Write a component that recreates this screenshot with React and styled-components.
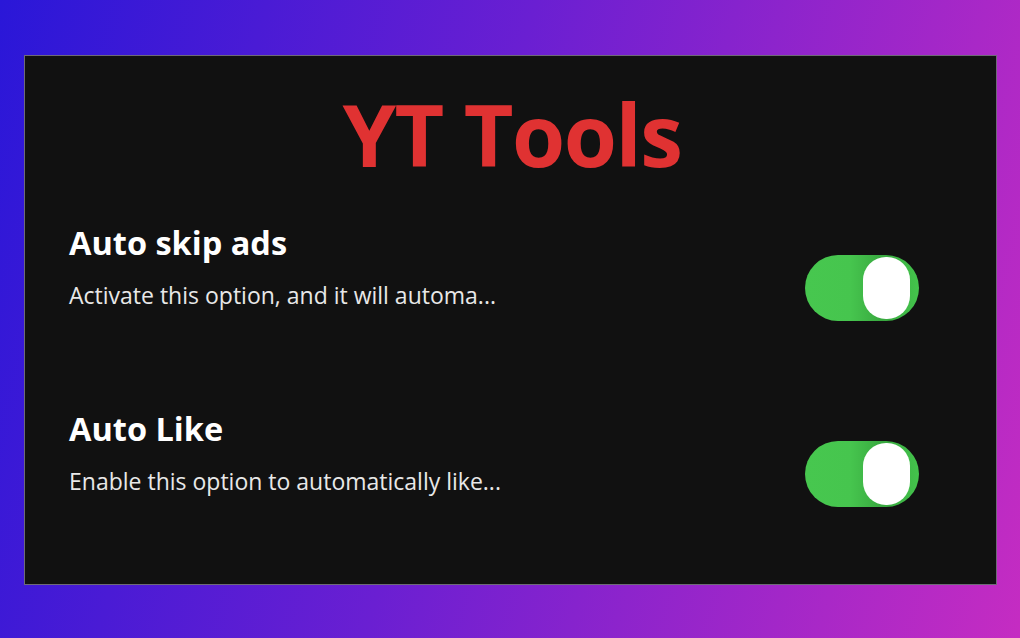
import React from 'react';
import styled, { createGlobalStyle } from 'styled-components';

const GlobalStyle = createGlobalStyle`
    html, body {
        margin: 0;
        padding: 0;
    }
    body {
        font-family: "Open Sans", "Noto Sans", sans-serif;
    }
`

const Page = styled.div`
    width: 1020px;
    height: 638px;
    box-sizing: border-box;
    padding: 55px 23px 53px 24px;
    background: linear-gradient(105deg, #2a17d8 0%, #6a1fd2 45%, #c52cc2 100%);
`

const Panel = styled.div`
    height: 100%;
    box-sizing: border-box;
    background-color: #111111;
    border: 1px solid #6f6a78;
    display: flex;
    flex-direction: column;
    padding: 28px 77px 0 44px;
`

const Title = styled.h1`
    margin: 0;
    text-align: center;
    color: #e03232;
    font-size: 86px;
    font-weight: 700;
    letter-spacing: -1.5px;
    line-height: 100px;
    padding-left: 36px;
`

const Option = styled.div`
    display: flex;
    align-items: flex-start;
    justify-content: space-between;
    margin-top: ${p => p.$first ? '39px' : '88px'};
`

const Texts = styled.div`
    display: flex;
    flex-direction: column;
`

const Heading = styled.h2`
    margin: 0;
    color: #ffffff;
    font-size: 32.5px;
    font-weight: 700;
    line-height: 40px;
`

const Desc = styled.p`
    margin: 17px 0 0;
    color: #e8e8e8;
    font-size: 23px;
    line-height: 30px;
`

const Switch = styled.div`
    width: 114px;
    height: 66px;
    margin-top: 32px;
    border-radius: 33px;
    background: linear-gradient(90deg, #47c74f 0%, #46c54e 40%, #38a83f 68%, #44c44c 100%);
    display: flex;
    align-items: center;
    justify-content: ${p => p.$on ? 'flex-end' : 'flex-start'};
    padding: 0 9px;
    box-sizing: border-box;
`

const Knob = styled.div`
    width: 47px;
    height: 62px;
    border-radius: 23px;
    background-color: #ffffff;
`

const options = [
    { title: 'Auto skip ads', desc: 'Activate this option, and it will automa...' },
    { title: 'Auto Like', desc: 'Enable this option to automatically like...' },
]

export default function App() {
    return (
        <>
            <GlobalStyle />
            <Page>
                <Panel>
                    <Title>YT Tools</Title>
                    {options.map((o, i) => (
                        <Option key={o.title} $first={i === 0}>
                            <Texts>
                                <Heading>{o.title}</Heading>
                                <Desc>{o.desc}</Desc>
                            </Texts>
                            <Switch $on>
                                <Knob />
                            </Switch>
                        </Option>
                    ))}
                </Panel>
            </Page>
        </>
    )
}
